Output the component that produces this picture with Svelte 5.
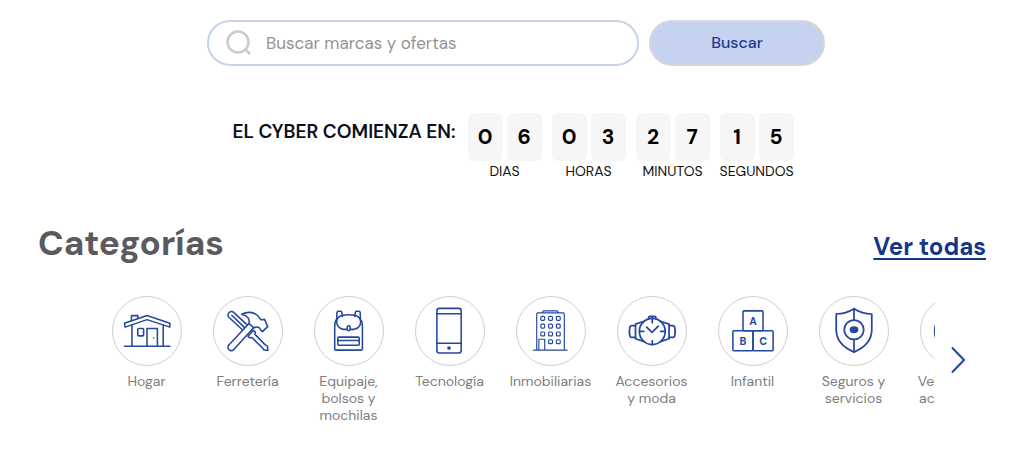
<script lang="ts">
	type Category = { name: string; icon: string };

	const categories: Category[] = [
		{ name: 'Hogar', icon: 'home' },
		{ name: 'Ferretería', icon: 'tools' },
		{ name: 'Equipaje, bolsos y mochilas', icon: 'backpack' },
		{ name: 'Tecnología', icon: 'phone' },
		{ name: 'Inmobiliarias', icon: 'building' },
		{ name: 'Accesorios y\u00a0moda', icon: 'watch' },
		{ name: 'Infantil', icon: 'blocks' },
		{ name: 'Seguros y servicios', icon: 'shield' },
		{ name: 'Vehículos y accesorios', icon: 'wheel' }
	];

	const countdown = [
		{ label: 'DIAS', value: '06' },
		{ label: 'HORAS', value: '03' },
		{ label: 'MINUTOS', value: '27' },
		{ label: 'SEGUNDOS', value: '15' }
	];

	let query = $state('');
	let track: HTMLUListElement;

	function next() {
		track.scrollBy({ left: 101, behavior: 'smooth' });
	}
</script>

<main class="page">
	<form class="search" role="search" onsubmit={(e) => e.preventDefault()}>
		<label class="search-field">
			<svg class="search-icon" viewBox="0 0 26 26" aria-hidden="true">
				<circle cx="12" cy="12" r="10.5" />
				<path d="M19.5 19.5l4.5 4.5" />
			</svg>
			<input type="text" aria-label="Buscar marcas y ofertas" placeholder="Buscar marcas y ofertas" bind:value={query} />
		</label>
		<button class="search-btn" type="submit">Buscar</button>
	</form>

	<section class="countdown">
		<h2 class="countdown-title">EL CYBER COMIENZA EN:</h2>
		<div class="units">
			{#each countdown as unit (unit.label)}
				<div class="unit">
					<div class="digits">
						{#each unit.value.split('') as digit}
							<span class="digit">{digit}</span>
						{/each}
					</div>
					<span class="unit-label">{unit.label}</span>
				</div>
			{/each}
		</div>
	</section>

	<section class="categories">
		<header class="cat-head">
			<h2 class="cat-title">Categorías</h2>
			<a class="cat-all" href="#todas">Ver todas</a>
		</header>

		<div class="carousel">
			<ul class="track" bind:this={track}>
				{#each categories as cat (cat.name)}
					<li class="item">
						<a class="cat" href="#{cat.icon}">
							<svg class="cat-icon {cat.icon}" viewBox="0 0 70 70" aria-hidden="true">
								{#if cat.icon === 'home'}
									<path d="M11.8 27L35 19l23.500 8v4L35 23.300 12.500 31z" />
									<path d="M19 24.5v-5.300h6.500v3M19.500 29v21.700M51.700 29v21.700M11.800 50.700h46.700" />
									<rect x="25.500" y="32.500" width="6" height="7.500" rx="1" />
									<path d="M35 50.700V32.500h10.700v18.200" />
									<circle class="dot" cx="41.800" cy="42.300" r="0.800" />
								{:else if cat.icon === 'tools'}
									<path d="M29.500 34L15.300 20.800c-1.300-1.300-1.200-3.300.2-4.600 1.500-1.400 3.600-1.500 5-.1L34.300 29" />
									<path d="M18.300 18.800l13.200 12.700" />
									<path d="M38.500 36.500l2-2.200 2 1.900-.3 2.300L52.500 49l2.500 1.500.5 4.500-4.500-.8-1.500-2.200L39 41.700l-2.500.3-1.500-1.600z" />
									<path d="M36 27.300L15.300 49.500c-1.400 1.600-1.200 3.600.2 4.800 1.500 1.300 3.600 1.200 4.900-.3L41 31.300" />
									<path d="M28.500 17.800c5.500-3 12-2.600 16.200 1.200 1.600 1.500 2.300 2.800 3.300 4.200 1.200.7 2.500.3 4-.2l3.300 7.500-5.500 5.200c-1.700-1.200-2.200-2.600-3.300-4.200-1.800-1-3.600-.6-5.500.3L36 27.300c1.200-4.700-1.500-8-7.500-9.500z" />
								{:else if cat.icon === 'backpack'}
									<path d="M22.500 22c-1.500 2-2.200 5-2.200 8v23.200c0 .8.500 1.500 1.500 1.500h25.500c.9 0 1.500-.7 1.500-1.500V30c0-3-.8-6-2.300-8" />
									<path d="M22.500 22v-5.500c0-1.200.7-1.800 1.800-1.800h2c.8 0 1.200.4 1.300 1.200l.4 4.100M46.600 22v-5.500c0-1.200-.7-1.800-1.800-1.800h-2c-.8 0-1.200.4-1.300 1.200l-.4 4.100" />
									<path d="M33 33.300h-4c-4-.8-6.700-4-6.700-7.700 0-5 5.500-7.300 12.400-7.300s12.300 2.300 12.300 7.300c0 3.700-2.700 6.900-6.700 7.700h-4" />
									<rect x="33.200" y="29.500" width="3" height="5.200" rx="1.400" />
									<rect x="23.500" y="41.300" width="22" height="8.400" rx="1" />
									<path d="M23.500 44.700h22" />
								{:else if cat.icon === 'phone'}
									<rect x="21.500" y="11.700" width="25" height="46" rx="2.500" />
									<path d="M21.500 17.300h25M21.500 47.700h25" />
									<circle class="dot" cx="34" cy="52.500" r="1.900" />
								{:else if cat.icon === 'building'}
									<path d="M20.300 54.700V17.500q0-1.200 1.200-1.200h26q1.200 0 1.200 1.200v37.200M26 16.300l1-2h14.500l1 2M17 54.700h34.500M22.500 54.700V43.500h6v11.200" />
									{#each [22, 30, 38, 46] as y}
										{#each [26.5, 34.5, 42.5] as x}
											{#if y < 46 || x > 30}
												<rect x={x - 2} y={y - 2} width="4" height="4" rx="1" />
											{/if}
										{/each}
									{/each}
								{:else if cat.icon === 'watch'}
									<ellipse cx="35.300" cy="35.500" rx="13.300" ry="13.500" />
									<path d="M31.500 22.300v-.8q0-1.500 1.500-1.500h4.600q1.500 0 1.500 1.500v.8M35.300 20.500v6M35.300 45v4M22.500 35.500h4M44 35.500h4" />
									<path d="M29.500 31l5.500 5.500 6.500-6.500" />
									<path d="M18 29.500h-4q-1.300 0-1.800 1.500-1 4.500 0 9 .5 1.500 1.800 1.500h4M52.600 29.500h4q1.300 0 1.800 1.500 1 4.500 0 9-.5 1.500-1.800 1.500h-4" />
									<path d="M27 25L18 28v15l9 3M43.600 25l9 3v15l-9 3" />
								{:else if cat.icon === 'blocks'}
									<rect x="24.700" y="14.300" width="20.600" height="20.500" rx="1" />
									<rect x="14.300" y="34.800" width="20.700" height="20.500" rx="1" />
									<rect x="35" y="34.800" width="20.700" height="20.500" rx="1" />
									<text x="35" y="29">A</text>
									<text x="24.500" y="49">B</text>
									<text x="45.500" y="49">C</text>
								{:else if cat.icon === 'shield'}
									<path d="M35 12c-5.500 3.500-11.500 5.300-18.300 5.500v16.300c0 10 7 18.200 18.300 22.900 11.300-4.700 18.300-12.900 18.300-22.900V17.500C46.500 17.300 40.500 15.500 35 12z" />
									<path d="M35 12v11.500M35 43.800v12.500" />
									<circle cx="35" cy="33.700" r="10" />
									<ellipse class="dot" cx="35" cy="33.700" rx="4.500" ry="3.600" />
								{:else}
									<circle cx="35" cy="35" r="21" />
									<circle cx="35" cy="35" r="12" />
								{/if}
							</svg>
							<span class="cat-name">{cat.name}</span>
						</a>
					</li>
				{/each}
			</ul>
			<button class="next" type="button" aria-label="Siguiente" onclick={next}>
				<svg viewBox="0 0 14 28" aria-hidden="true"><path d="M1 1.5L13 14 1 26.5" /></svg>
			</button>
		</div>
	</section>
</main>

<style>
	:global(body) {
		margin: 0;
		background: #fff;
	}
	.page {
		font-family: 'DM Sans', Inter, sans-serif;
		padding: 20px 38px 24px;
	}
	.search {
		display: flex;
		gap: 10px;
		max-width: 618px;
		height: 46px;
		margin: 0 auto;
		padding-left: 8px;
	}
	.search-field {
		flex: 1;
		min-width: 0;
		box-sizing: border-box;
		display: flex;
		align-items: center;
		gap: 14px;
		padding: 0 17px;
		border: 2px solid #c6d2ee;
		border-radius: 23px;
	}
	.search-icon {
		flex: none;
		width: 26px;
		height: 26px;
		fill: none;
		stroke: #cbcbcb;
		stroke-width: 2.5;
	}
	.search-field input {
		flex: 1;
		min-width: 0;
		padding: 0;
		border: 0;
		outline: 0;
		background: none;
		font: 400 17px/20px 'DM Sans', Inter, sans-serif;
		color: #5a5a5a;
	}
	.search-field input::placeholder {
		color: #939393;
		opacity: 1;
	}
	.search-btn {
		width: 176px;
		border: 2px solid #d6d6d8;
		border-radius: 23px;
		background: #c5d3f0;
		color: #1c398e;
		font: 500 16px/20px 'DM Sans', Inter, sans-serif;
		cursor: pointer;
	}

	.countdown {
		display: flex;
		justify-content: center;
		gap: 12px;
		margin-top: 47px;
		padding-left: 2px;
	}
	.countdown-title {
		margin: 0;
		padding-top: 7px;
		font-size: 19px;
		line-height: 24px;
		font-weight: 600;
		color: #0b0f1a;
	}
	.units {
		display: flex;
		gap: 10px;
	}
	.unit {
		width: 74px;
		display: flex;
		flex-direction: column;
		align-items: center;
	}
	.digits {
		display: flex;
		gap: 4px;
	}
	.digit {
		width: 35px;
		height: 48px;
		border-radius: 6px;
		background: #f6f6f6;
		font-size: 21px;
		line-height: 48px;
		font-weight: 700;
		text-align: center;
		color: #000;
	}
	.unit-label {
		font-size: 14px;
		line-height: 20px;
		color: #111;
	}

	.cat-head {
		display: flex;
		align-items: baseline;
		justify-content: space-between;
		margin-top: 40px;
	}
	.cat-title {
		margin: 0;
		font-size: 35px;
		line-height: 44px;
		font-weight: 700;
		color: #5b5b5d;
	}
	.cat-all {
		font-size: 24px;
		line-height: 30px;
		font-weight: 700;
		color: #14378a;
		text-decoration: underline;
		text-decoration-thickness: 2px;
		text-underline-offset: 3px;
	}
	.carousel {
		display: flex;
		align-items: center;
		margin-top: 31px;
		padding-left: 58px;
	}
	.track {
		flex: 1;
		min-width: 0;
		display: flex;
		margin: 0;
		padding: 0;
		list-style: none;
		overflow: hidden;
	}
	.item {
		flex: none;
		width: 101px;
	}
	.cat {
		display: flex;
		flex-direction: column;
		align-items: center;
		gap: 7px;
		text-decoration: none;
	}
	.cat-icon {
		box-sizing: border-box;
		width: 70px;
		height: 70px;
		border: 1px solid #cfcfcf;
		border-radius: 50%;
		fill: none;
		stroke: #2447a0;
		stroke-width: 1.6;
		stroke-linejoin: round;
		stroke-linecap: round;
	}
	.cat-icon.building {
		stroke-width: 1.2;
	}
	.cat-icon.shield,
	.cat-icon.watch {
		stroke-width: 1.8;
	}
	.cat-icon .dot {
		fill: #2447a0;
		stroke: none;
	}
	.cat-icon text {
		font-size: 11px;
		font-weight: 700;
		text-anchor: middle;
		fill: #2447a0;
		stroke: none;
	}
	.cat-name {
		width: 85px;
		font-size: 14px;
		line-height: 17px;
		text-align: center;
		color: #7d7d7d;
	}
	.next {
		width: 51px;
		padding: 0 5px 0 0;
		border: 0;
		background: none;
		cursor: pointer;
	}
	.next svg {
		display: block;
		width: 14px;
		height: 28px;
		margin: 0 auto;
		fill: none;
		stroke: #2447a0;
		stroke-width: 2;
	}
</style>
